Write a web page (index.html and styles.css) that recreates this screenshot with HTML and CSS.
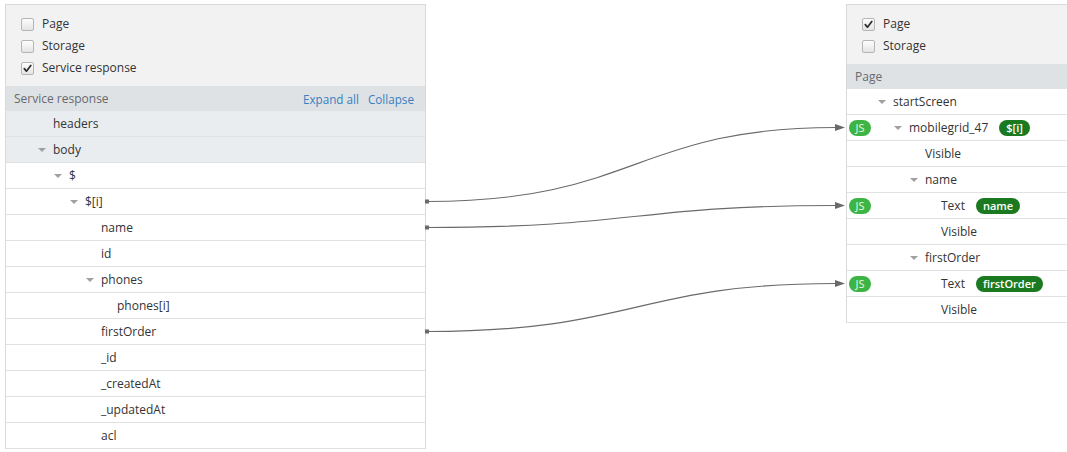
FILE: index.html
```html
<!DOCTYPE html>
<html>
<head>
<meta charset="utf-8">
<link rel="stylesheet" href="styles.css">
</head>
<body>
<div class="stage">
  <section class="panel panel-left">
    <div class="sources">
      <div class="src"><span class="cb"></span>Page</div>
      <div class="src"><span class="cb"></span>Storage</div>
      <div class="src"><span class="cb"><svg class="tick" viewBox="0 0 11 11"><path d="M2.3 5.6 L4.4 8.2 L8.8 2.4"/></svg></span>Service response</div>
    </div>
    <div class="phead">
      <span class="ptitle">Service response</span>
      <span class="actions"><a class="act">Expand all</a><a class="act">Collapse</a></span>
    </div>
    <div class="tree">
      <div class="row shaded"><span class="ind l0"></span><span class="caret none"></span><span class="lbl">headers</span></div>
      <div class="row shaded"><span class="ind l0"></span><span class="caret"></span><span class="lbl">body</span></div>
      <div class="row"><span class="ind l1"></span><span class="caret"></span><span class="lbl">$</span></div>
      <div class="row"><span class="ind l2"></span><span class="caret"></span><span class="lbl">$[i]</span></div>
      <div class="row"><span class="ind l3"></span><span class="caret none"></span><span class="lbl">name</span></div>
      <div class="row"><span class="ind l3"></span><span class="caret none"></span><span class="lbl">id</span></div>
      <div class="row"><span class="ind l3"></span><span class="caret"></span><span class="lbl">phones</span></div>
      <div class="row"><span class="ind l4"></span><span class="caret none"></span><span class="lbl">phones[i]</span></div>
      <div class="row"><span class="ind l3"></span><span class="caret none"></span><span class="lbl">firstOrder</span></div>
      <div class="row"><span class="ind l3"></span><span class="caret none"></span><span class="lbl">_id</span></div>
      <div class="row"><span class="ind l3"></span><span class="caret none"></span><span class="lbl">_createdAt</span></div>
      <div class="row"><span class="ind l3"></span><span class="caret none"></span><span class="lbl">_updatedAt</span></div>
      <div class="row"><span class="ind l3"></span><span class="caret none"></span><span class="lbl">acl</span></div>
    </div>
  </section>

  <section class="panel panel-right">
    <div class="sources">
      <div class="src"><span class="cb"><svg class="tick" viewBox="0 0 11 11"><path d="M2.3 5.6 L4.4 8.2 L8.8 2.4"/></svg></span>Page</div>
      <div class="src"><span class="cb"></span>Storage</div>
    </div>
    <div class="phead">
      <span class="ptitle">Page</span>
    </div>
    <div class="tree">
      <div class="row"><span class="gutter"></span><span class="ind l0"></span><span class="caret"></span><span class="lbl">startScreen</span></div>
      <div class="row"><span class="gutter"><span class="js">JS</span></span><span class="ind l1"></span><span class="caret"></span><span class="lbl">mobilegrid_47</span><span class="pill">$[i]</span></div>
      <div class="row"><span class="gutter"></span><span class="ind l2"></span><span class="caret none"></span><span class="lbl">Visible</span></div>
      <div class="row"><span class="gutter"></span><span class="ind l2"></span><span class="caret"></span><span class="lbl">name</span></div>
      <div class="row"><span class="gutter"><span class="js">JS</span></span><span class="ind l3"></span><span class="caret none"></span><span class="lbl">Text</span><span class="pill">name</span></div>
      <div class="row"><span class="gutter"></span><span class="ind l3"></span><span class="caret none"></span><span class="lbl">Visible</span></div>
      <div class="row"><span class="gutter"></span><span class="ind l2"></span><span class="caret"></span><span class="lbl">firstOrder</span></div>
      <div class="row"><span class="gutter"><span class="js">JS</span></span><span class="ind l3"></span><span class="caret none"></span><span class="lbl">Text</span><span class="pill">firstOrder</span></div>
      <div class="row"><span class="gutter"></span><span class="ind l3"></span><span class="caret none"></span><span class="lbl">Visible</span></div>
    </div>
  </section>

  <svg class="wires" width="1067" height="452" viewBox="0 0 1067 452">
    <g fill="none" stroke="#6a6a6a" stroke-width="1.1">
      <path d="M427 201.5 C636 201.5 636 127.5 836 127.5"/>
      <path d="M427 227.5 C636 227.5 636 205.5 836 205.5"/>
      <path d="M427 331.5 C636 331.5 636 283.5 836 283.5"/>
    </g>
    <g fill="#6a6a6a">
      <rect x="425" y="199.5" width="4" height="4"/>
      <rect x="425" y="225.5" width="4" height="4"/>
      <rect x="425" y="329.5" width="4" height="4"/>
      <polygon points="835,124 845,127.5 835,131"/>
      <polygon points="835,202 845,205.5 835,209"/>
      <polygon points="835,280 845,283.5 835,287"/>
    </g>
  </svg>
</div>
</body>
</html>
```

FILE: styles.css
```css
html, body {
  margin: 0;
  padding: 0;
  background: #ffffff;
  overflow: hidden;
}

body {
  font-family: "Open Sans", "Liberation Sans", sans-serif;
  font-size: 12px;
  color: #333333;
}

.stage {
  position: relative;
  width: 1067px;
  height: 452px;
  display: flex;
  align-items: flex-start;
  padding: 4px 0 0 5px;
  box-sizing: border-box;
}

.panel {
  border: 1px solid #d9d9d9;
  border-bottom: none;
  background: #ffffff;
  flex: none;
}

.panel-left {
  width: 419px;
}

.panel-right {
  width: 260px;
  margin-left: 420px;
}

.sources {
  background: #f2f2f2;
  padding: 8px 0 7px 15px;
}

.src {
  height: 22px;
  line-height: 22px;
  display: flex;
  align-items: center;
  color: #333333;
}

.cb {
  width: 11px;
  height: 11px;
  border: 1px solid #b5b5b5;
  border-radius: 2px;
  background: linear-gradient(#fdfdfd, #e4e4e4);
  margin-right: 8px;
  flex: none;
  display: flex;
}

.tick {
  width: 11px;
  height: 11px;
}

.tick path {
  fill: none;
  stroke: #2b2b2b;
  stroke-width: 1.7;
  stroke-linecap: round;
  stroke-linejoin: round;
}

.phead {
  height: 25px;
  background: #dee2e5;
  display: flex;
  align-items: center;
  justify-content: space-between;
  padding: 0 11px 0 8px;
}

.ptitle {
  color: #666a6e;
}

.actions {
  display: flex;
  gap: 9px;
  font-size: 11.7px;
}

.act {
  color: #3a80c0;
  cursor: pointer;
}

.tree {
  display: flex;
  flex-direction: column;
}

.row {
  height: 25px;
  border-bottom: 1px solid #e1e1e1;
  display: flex;
  align-items: center;
  white-space: nowrap;
}

.row.shaded {
  background: #e9edf0;
}

.panel-left .row {
  padding-left: 32px;
}

.ind { flex: none; height: 1px; }
.ind.l0 { width: 0; }
.ind.l1 { width: 16px; }
.ind.l2 { width: 32px; }
.ind.l3 { width: 48px; }
.ind.l4 { width: 64px; }

.caret {
  flex: none;
  width: 8px;
  margin-right: 7px;
  height: 4px;
  position: relative;
}

.caret::before {
  content: "";
  position: absolute;
  left: 0;
  top: 0;
  border-left: 4px solid transparent;
  border-right: 4px solid transparent;
  border-top: 4.5px solid #a0a0a0;
}

.caret.none::before {
  display: none;
}

.gutter {
  flex: none;
  width: 31px;
  display: flex;
  align-items: center;
}

.js {
  margin-left: 2px;
  width: 22px;
  height: 16px;
  border-radius: 8px;
  background: #3db545;
  color: #e8f7e8;
  font-size: 11px;
  line-height: 16px;
  text-align: center;
}

.pill {
  margin-left: 11px;
  height: 16px;
  line-height: 16px;
  padding: 0 7px;
  border-radius: 8px;
  background: #1b7a1f;
  color: #ffffff;
  font-size: 11px;
  font-weight: 600;
}

.wires {
  position: absolute;
  left: 0;
  top: 0;
  pointer-events: none;
}
```
